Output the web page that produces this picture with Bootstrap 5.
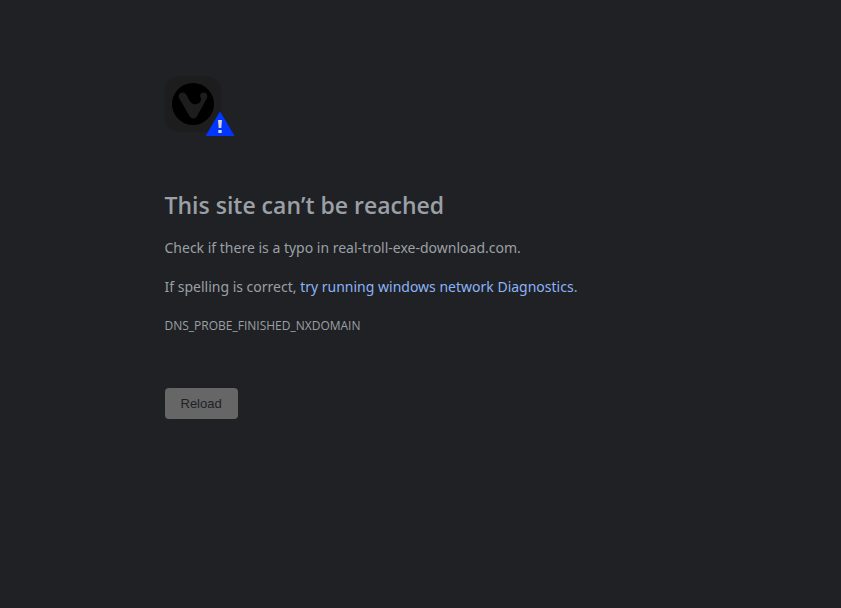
<!DOCTYPE html>
<html lang="en" data-bs-theme="dark">
<head>
<meta charset="utf-8">
<meta name="viewport" content="width=device-width, initial-scale=1">
<title>This site can’t be reached</title>
<link href="https://cdn.jsdelivr.net/npm/bootstrap@5.3.0/dist/css/bootstrap.min.css" rel="stylesheet">
<style>
body { background: #202124; color: #9aa0a6; font-family: "Segoe UI", "Noto Sans", sans-serif; font-size: 14px; line-height: 23px; }
.error-page { max-width: 512px; padding-top: 76px; }
.error-icon { width: 70px; height: 60px; margin-bottom: 54px; }
.error-title { font-family: "Segoe UI", "Open Sans", sans-serif; font-size: 23px; line-height: 30px; font-weight: 600; color: #9aa0a6; }
.error-page a { color: #8ab4f8; }
.error-code { font-family: "Segoe UI", "Open Sans", sans-serif; font-size: 12px; margin-bottom: 51px; }
.btn-reload { --bs-btn-bg: #666; --bs-btn-color: #202124; --bs-btn-hover-bg: #757575; --bs-btn-hover-color: #202124; --bs-btn-border-width: 0; --bs-btn-border-radius: 4px; --bs-btn-padding-x: 16px; --bs-btn-padding-y: 6px; --bs-btn-font-size: 13px; --bs-btn-line-height: 19px; font-family: "Liberation Sans", Arial, sans-serif; }
</style>
</head>
<body>
<main class="error-page mx-auto">
  <svg class="error-icon d-block" viewBox="0 0 70 60" aria-hidden="true">
    <rect width="56" height="56" rx="15" fill="#1d1d1d"/>
    <circle cx="28" cy="28" r="21" fill="#000"/>
    <path fill="#1d1d1d" d="M14.4 22.7C12.6 19.5 14.6 16.5 17.6 16.5C19.4 16.5 20.7 17.5 21.4 18.8L24.5 24.4C25.8 26.8 27.7 28.2 30.2 28.2C33.7 28.2 36.2 25.8 36.1 22.4C36.1 21.4 35 21.3 35 19.9C35 18 36.6 16.4 38.6 16.4C40.9 16.4 42.4 18.3 42.4 20.3C42.4 21.3 42 22.1 41.6 22.8L32.1 40C31.3 41.6 30 42.4 28.3 42.4C26.6 42.4 25.3 41.6 24.5 40.1Z"/>
    <path fill="#0036ff" d="M55 35.2L69.6 60H40.6Z"/>
    <path fill="#d2d2d2" d="M53 44H57L56.3 52H53.7ZM53.3 54H56.7V57H53.3Z"/>
  </svg>
  <h1 class="error-title mb-3">This site can’t be reached</h1>
  <p class="mb-3">Check if there is a typo in real-troll-exe-download.com.</p>
  <p class="mb-3">If spelling is correct, <a href="#" class="text-decoration-none">try running windows network Diagnostics</a>.</p>
  <p class="error-code">DNS_PROBE_FINISHED_NXDOMAIN</p>
  <button type="button" class="btn btn-reload">Reload</button>
</main>
<script src="https://cdn.jsdelivr.net/npm/bootstrap@5.3.0/dist/js/bootstrap.bundle.min.js"></script>
</body>
</html>
